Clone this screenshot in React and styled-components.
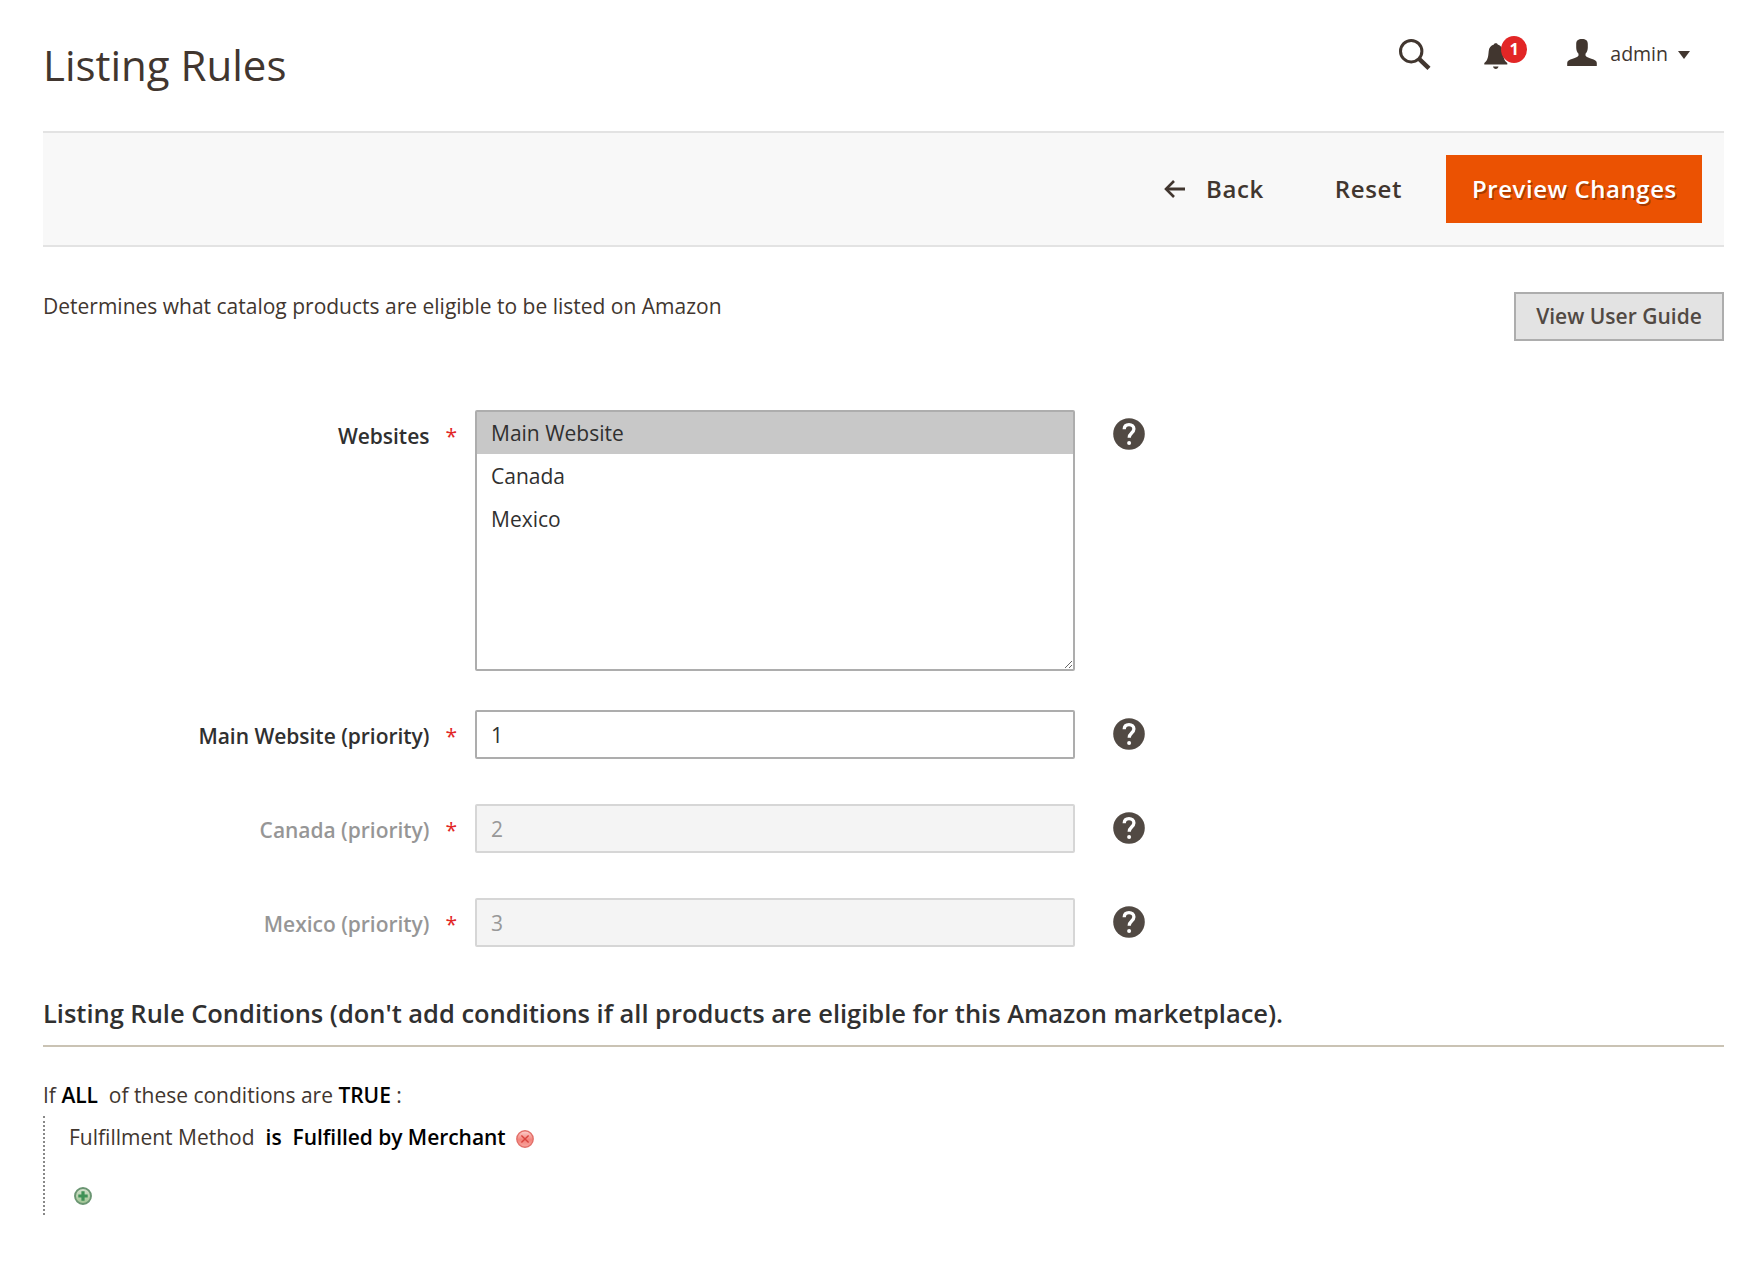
import React from 'react';
import styled, { createGlobalStyle, css } from 'styled-components';

const GlobalStyle = createGlobalStyle`
  *, *::before, *::after { box-sizing: border-box; }
  body {
    margin: 0;
    background: #fff;
    color: #41362f;
    font-family: 'Open Sans', 'Noto Sans', sans-serif;
    font-size: 21px;
    line-height: 30px;
  }
  button, input { font-family: inherit; }
  svg { flex-shrink: 0; }
`;

const Page = styled.div`
  display: flex;
  flex-direction: column;
  min-height: 1278px;
  padding: 0 36px 0 43px;
`;

const Header = styled.header`
  display: flex;
  justify-content: space-between;
  align-items: flex-start;
  height: 131px;
  padding: 39px 34px 0 0;
`;

const Title = styled.h1`
  margin: 1px 0 0;
  font-size: 42px;
  font-weight: 400;
  line-height: 50px;
`;

const HeaderTools = styled.div`
  display: flex;
  align-items: flex-start;
  color: #41362f;
`;

const IconButton = styled.button`
  display: flex;
  padding: 0;
  border: 0;
  background: none;
  color: inherit;
`;

const Notifications = styled(IconButton)`
  position: relative;
  margin: 4px 59px 0 53px;
`;

const Badge = styled.span`
  position: absolute;
  top: -7px;
  left: 17px;
  width: 26px;
  height: 27px;
  border-radius: 50%;
  background: #e22626;
  color: #fff;
  font-size: 16.5px;
  font-weight: 700;
  line-height: 26px;
  text-align: center;
`;

const Account = styled.div`
  display: flex;
  font-size: 19.5px;
  line-height: 30px;
`;

const AccountName = styled.span`
  margin: 0 10px 0 13px;
`;

const Caret = styled.span`
  width: 12px;
  height: 8px;
  margin-top: 12px;
  background: #41362f;
  clip-path: polygon(0 0, 100% 0, 50% 100%);
`;

const ActionBar = styled.div`
  display: flex;
  justify-content: flex-end;
  align-items: center;
  height: 116px;
  padding-right: 22px;
  border-top: 2px solid #e3e3e3;
  border-bottom: 2px solid #e3e3e3;
  background: #f8f8f8;
`;

const ActionButton = styled.button`
  display: flex;
  align-items: center;
  height: 68px;
  padding: 0 0 2px;
  margin-right: ${(p) => p.$gap || 0}px;
  border: 0;
  background: transparent;
  color: #41362f;
  font-size: 24px;
  font-weight: 600;
  letter-spacing: 0.6px;
  white-space: nowrap;
  svg { margin: 1px 21px 0 0; }
  ${(p) => p.$primary && css`
    width: 256px;
    padding-left: 26px;
    background: #eb5202;
    color: #fff;
    letter-spacing: 0.55px;
    text-shadow: 1.5px 1.5px 0 rgba(0, 0, 0, 0.3);
  `}
`;

const Intro = styled.div`
  display: flex;
  justify-content: space-between;
  align-items: flex-start;
  height: 163px;
  padding-top: 44px;
`;

const Description = styled.p`
  margin: 0;
`;

const GuideButton = styled.button`
  width: 210px;
  height: 49px;
  margin-top: 1px;
  padding: 0 0 1px;
  border: 2px solid #adadad;
  background: #e3e3e3;
  color: #514943;
  font-size: 21px;
  font-weight: 600;
`;

const Form = styled.div`
  display: flex;
  flex-direction: column;
`;

const Field = styled.div`
  display: grid;
  grid-template-columns: 432px 600px 70px;
  align-items: start;
  margin-bottom: ${(p) => p.$gap}px;
`;

const Label = styled.label`
  display: flex;
  justify-content: flex-end;
  padding: 3px 18px 0 0;
  color: #303030;
  font-weight: 600;
  line-height: 47px;
`;

const LabelText = styled.span`
  letter-spacing: -0.03px;
  opacity: ${(p) => (p.$disabled ? 0.5 : 1)};
`;

const Required = styled.span`
  margin-left: 16px;
  color: #e22626;
  font-weight: 400;
`;

const ListBox = styled.ul`
  height: 261px;
  margin: 0;
  padding: 0;
  overflow: auto;
  resize: vertical;
  border: 2px solid #adadad;
  border-radius: 2px;
  background: #fff;
  list-style: none;
`;

const Option = styled.li`
  height: 42px;
  margin-bottom: 1px;
  padding-left: 14px;
  background: ${(p) => (p.$selected ? '#c8c8c8' : 'transparent')};
  color: #303030;
  line-height: 42px;
`;

const TextInput = styled.input`
  width: 100%;
  height: 49px;
  padding: 0 14px;
  border: 2px solid #adadad;
  border-radius: 2px;
  background: #fff;
  color: #303030;
  font-size: 21px;
  &:disabled {
    border-color: #d6d6d6;
    background: #f4f4f4;
    color: #989898;
  }
`;

const HelpSlot = styled.div`
  display: flex;
  padding: 8px 0 0 38px;
`;

const SectionTitle = styled.h2`
  margin: 0;
  padding-bottom: 12px;
  border-bottom: 2px solid #cac3b4;
  color: #303030;
  font-size: 25.5px;
  font-weight: 600;
  letter-spacing: -0.02px;
  line-height: 40px;
`;

const RuleText = styled.p`
  margin: 33px 0 6px;
  white-space: pre;
`;

const Editable = styled.span`
  color: #000;
  font-weight: 600;
  letter-spacing: -0.05px;
`;

const RuleTree = styled.div`
  display: flex;
  flex-direction: column;
  align-items: flex-start;
  height: 99px;
  padding: 6px 0 0 24px;
  border-left: 2px dotted #888;
`;

const Condition = styled.div`
  display: flex;
  gap: 11px;
  svg { margin: 8px 0 0 -1px; }
`;

const AddSlot = styled.div`
  display: flex;
  padding: 35px 0 0 5px;
`;

const SearchIcon = () => (
  <svg width="32" height="32" viewBox="0 0 32 32" fill="none" stroke="currentColor">
    <circle cx="12.2" cy="12.2" r="10.7" strokeWidth="3" />
    <path d="M19.8 19.6 L30 29.4" strokeWidth="4.4" />
  </svg>
);

const BellIcon = () => (
  <svg width="24" height="27" viewBox="0 0 24 27" fill="currentColor">
    <path d="M11.8 .2c1 0 1.7.5 1.9 1.4 3.2.9 4.9 3.4 5.2 6.6.5 5.9 1 9.2 4.4 11.7v1.7H.3v-1.7c3.4-2.5 3.9-5.8 4.4-11.7.3-3.2 2-5.7 5.2-6.6.2-.9.9-1.4 1.9-1.4z" />
    <path d="M9 23.6h5.5c-.3 1.5-1.3 2.4-2.7 2.4s-2.5-.9-2.800-2.400z" />
  </svg>
);

const UserIcon = () => (
  <svg width="30" height="27" viewBox="0 0 30 27" fill="currentColor">
    <path d="M15 0c3.8 0 5.8 1.4 5.8 5v3.5c0 2.5-.8 4.5-2.3 6.3v1.7c.5 1.5 3 2.3 5.8 3.2 3.5 1.1 5.5 1.9 5.5 4.3v3H.2v-3c0-2.4 2-3.2 5.5-4.3 2.8-.9 5.3-1.7 5.8-3.2v-1.7C10 13 9.2 11 9.2 8.5V5C9.2 1.4 11.2 0 15 0z" />
  </svg>
);

const ArrowIcon = () => (
  <svg width="21" height="18" viewBox="0 0 21 18" fill="none" stroke="currentColor">
    <path d="M2 9H21" strokeWidth="3" />
    <path d="M10 1 2 9l8 8" strokeWidth="2.6" />
  </svg>
);

const HelpIcon = () => (
  <svg width="32" height="32" viewBox="0 0 32 32">
    <circle cx="16" cy="16" r="15.8" fill="#514943" />
    <path d="M11.2 11.3C11.3 8.2 13.2 6.6 16 6.6s4.9 1.8 4.9 4.4c0 4-4.7 4.2-4.7 8.7" fill="none" stroke="#fff" strokeWidth="3.3" />
    <circle cx="16.1" cy="24.9" r="2" fill="#fff" />
  </svg>
);

const RemoveIcon = () => (
  <svg width="18" height="18" viewBox="0 0 18 18">
    <defs>
      <linearGradient id="removeFill" x1="0" y1="0" x2="0" y2="1">
        <stop offset="0" stopColor="#fcd3cf" />
        <stop offset="0.55" stopColor="#f3827a" />
        <stop offset="1" stopColor="#f9a8a1" />
      </linearGradient>
    </defs>
    <circle cx="9" cy="9" r="8.2" fill="url(#removeFill)" stroke="#e2706a" strokeWidth="1.4" />
    <path d="M5.4 5.4l7.2 7.2M12.6 5.4l-7.2 7.2" stroke="#d8433d" strokeWidth="1.4" />
  </svg>
);

const AddIcon = () => (
  <svg width="18" height="18" viewBox="0 0 18 18">
    <defs>
      <linearGradient id="addFill" x1="0" y1="0" x2="0" y2="1">
        <stop offset="0" stopColor="#d5e2cf" />
        <stop offset="1" stopColor="#9dc390" />
      </linearGradient>
    </defs>
    <circle cx="9" cy="9" r="8" fill="url(#addFill)" stroke="#6a9572" strokeWidth="1.9" />
    <path d="M9 4.3v9.4M4.3 9h9.4" stroke="#3f9156" strokeWidth="3.2" />
  </svg>
);

const websites = ['Main Website', 'Canada', 'Mexico'];

function FormField({ label, disabled, gap, children }) {
  return (
    <Field $gap={gap}>
      <Label>
        <LabelText $disabled={disabled}>{label}</LabelText>
        <Required>*</Required>
      </Label>
      {children}
      <HelpSlot><HelpIcon /></HelpSlot>
    </Field>
  );
}

export default function App() {
  return (
    <>
      <GlobalStyle />
      <Page>
        <Header>
          <Title>Listing Rules</Title>
          <HeaderTools>
            <IconButton aria-label="Search"><SearchIcon /></IconButton>
            <Notifications aria-label="Notifications">
              <BellIcon />
              <Badge>1</Badge>
            </Notifications>
            <Account>
              <UserIcon />
              <AccountName>admin</AccountName>
              <Caret />
            </Account>
          </HeaderTools>
        </Header>
        <ActionBar>
          <ActionButton $gap={71}><ArrowIcon />Back</ActionButton>
          <ActionButton $gap={44}>Reset</ActionButton>
          <ActionButton $primary>Preview Changes</ActionButton>
        </ActionBar>
        <Intro>
          <Description>Determines what catalog products are eligible to be listed on Amazon</Description>
          <GuideButton>View User Guide</GuideButton>
        </Intro>
        <Form>
          <FormField label="Websites" gap={39}>
            <ListBox>
              {websites.map((name, i) => (
                <Option key={name} $selected={i === 0}>{name}</Option>
              ))}
            </ListBox>
          </FormField>
          {websites.map((name, i) => (
            <FormField key={name} label={`${name} (priority)`} disabled={i > 0} gap={i === 2 ? 45 : 44}>
              <TextInput defaultValue={i + 1} disabled={i > 0} />
            </FormField>
          ))}
        </Form>
        <SectionTitle>
          Listing Rule Conditions (don't add conditions if all products are eligible for this Amazon marketplace).
        </SectionTitle>
        <RuleText>
          {'If '}<Editable>ALL</Editable>{'  of these conditions are '}<Editable>TRUE</Editable>{' :'}
        </RuleText>
        <RuleTree>
          <Condition>
            <span>Fulfillment Method</span>
            <Editable>is</Editable>
            <Editable>Fulfilled by Merchant</Editable>
            <RemoveIcon />
          </Condition>
          <AddSlot><AddIcon /></AddSlot>
        </RuleTree>
      </Page>
    </>
  );
}
